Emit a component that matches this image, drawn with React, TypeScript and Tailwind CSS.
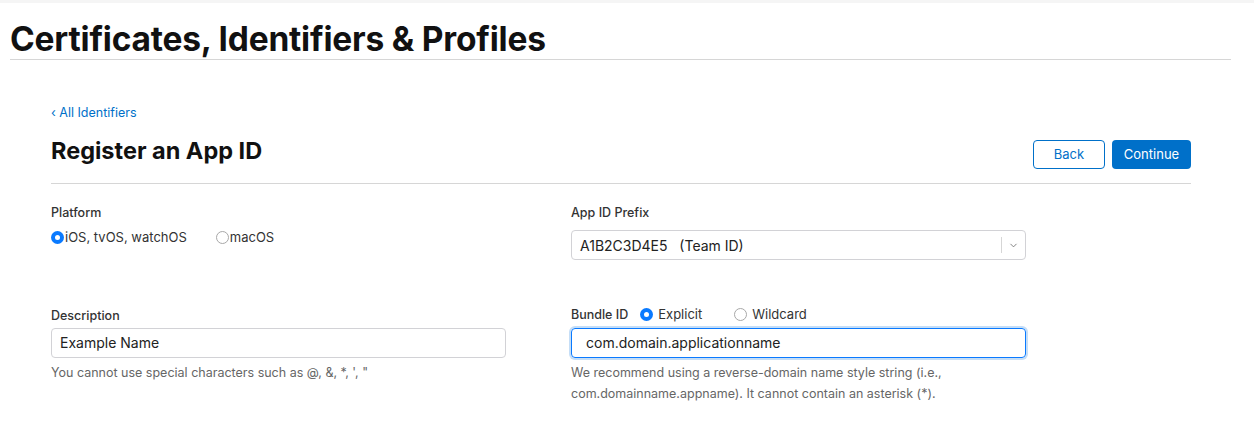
import { ChevronDown } from 'lucide-react';

function Radio({ checked, label, gap = 'ml-[1px]' }: { checked?: boolean; label: string; gap?: string }) {
  return (
    <label className="flex items-center text-[13px] text-[#333]">
      {checked ? (
        <span className="w-[13px] h-[13px] rounded-full bg-[#0a7aff] flex items-center justify-center">
          <span className="w-[5px] h-[5px] rounded-full bg-white" />
        </span>
      ) : (
        <span className="w-[13px] h-[13px] rounded-full border border-[#a8a8a8] bg-white" />
      )}
      <span className={gap}>{label}</span>
    </label>
  );
}

export default function App() {
  return (
    <div className="w-[1254px] h-[437px] bg-white font-['Inter',sans-serif] text-[#333] overflow-hidden">
      <div className="h-[3px] bg-[#f5f5f5]" />
      <div className="px-[10px] mr-[13px]">
        <h1 className="pt-[20px] pb-[3px] text-[33.5px] leading-[33px] font-bold tracking-[-0.2px] text-[#111]">
          Certificates, Identifiers &amp; Profiles
        </h1>
        <div className="h-px bg-[#d6d6d6]" />
      </div>

      <div className="ml-[51px] w-[1140px]">
        <a className="block mt-[45px] text-[12.5px] leading-[15px] text-[#0070c9]">
          ‹ All Identifiers
        </a>
        <div className="flex items-end justify-between mt-[17px] pb-[15px] border-b border-[#d6d6d6]">
          <h2 className="text-[23.5px] leading-[26px] font-bold text-[#111] mt-[1px] mb-[4px]">Register an App ID</h2>
          <div className="flex gap-[7px] mb-[-1px]">
            <button className="w-[72px] h-[29px] rounded-[4px] border border-[#0070c9] text-[13px] text-[#0070c9] bg-white">
              Back
            </button>
            <button className="w-[79px] h-[29px] rounded-[4px] bg-[#0070c9] text-[13px] text-white">
              Continue
            </button>
          </div>
        </div>

        <div className="flex gap-[65px] mt-[21px]">
          <div className="w-[455px]">
            <div className="text-[12.5px] leading-[15px] font-medium text-[#333]">Platform</div>
            <div className="flex gap-[29px] mt-[8px]">
              <Radio checked label="iOS, tvOS, watchOS" />
              <Radio label="macOS" />
            </div>

            <div className="mt-[60px] text-[12.5px] leading-[15px] font-medium text-[#333]">Description</div>
            <div className="mt-[5px] h-[30px] border border-[#d2d2d6] rounded-[4px] px-[8px] flex items-center text-[14px] text-[#222]">
              Example Name
            </div>
            <div className="mt-[7px] text-[12.5px] leading-[16px] text-[#666]">
              You cannot use special characters such as @, &amp;, *, ', "
            </div>
          </div>

          <div className="w-[455px]">
            <div className="text-[12.5px] leading-[15px] font-medium text-[#333]">App ID Prefix</div>
            <div className="mt-[10px] h-[30px] border border-[#d2d2d6] rounded-[4px] flex items-center text-[14px] text-[#222]">
              <span className="flex-1 pl-[8px] whitespace-pre">A1B2C3D4E5   (Team ID)</span>
              <span className="w-px h-[16px] bg-[#d6d6d6]" />
              <span className="w-[23px] flex justify-center text-[#666]">
                <ChevronDown size={11} strokeWidth={1.75} />
              </span>
            </div>

            <div className="mt-[45px] flex items-center">
              <span className="text-[12.5px] leading-[15px] font-medium text-[#333]">Bundle ID</span>
              <div className="flex gap-[32px] ml-[12px]">
                <Radio checked label="Explicit" gap="ml-[5px]" />
                <Radio label="Wildcard" gap="ml-[5px]" />
              </div>
            </div>
            <div className="mt-[3px] h-[30px] border border-[#0a7aff] rounded-[4px] shadow-[0_0_0_2px_#c5def7] px-[14px] flex items-center text-[14px] text-[#222]">
              com.domain.applicationname
            </div>
            <div className="mt-[4px] text-[12.5px] leading-[21px] text-[#666]">
              We recommend using a reverse-domain name style string (i.e.,
              <br />
              com.domainname.appname). It cannot contain an asterisk (*).
            </div>
          </div>
        </div>
      </div>
    </div>
  );
}
